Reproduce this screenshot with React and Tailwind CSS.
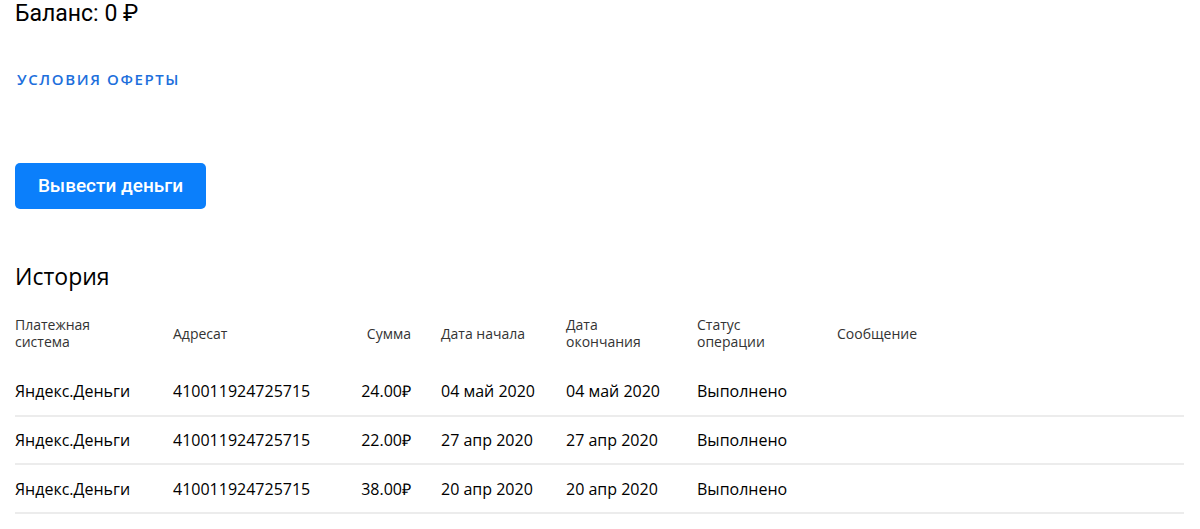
const rows = [
  { system: "Яндекс.Деньги", to: "410011924725715", sum: "24.00₽", start: "04 май 2020", end: "04 май 2020", status: "Выполнено" },
  { system: "Яндекс.Деньги", to: "410011924725715", sum: "22.00₽", start: "27 апр 2020", end: "27 апр 2020", status: "Выполнено" },
  { system: "Яндекс.Деньги", to: "410011924725715", sum: "38.00₽", start: "20 апр 2020", end: "20 апр 2020", status: "Выполнено" },
];

const cols = "grid grid-cols-[158px_168px_100px_125px_131px_140px_1fr] items-center";

export default function App() {
  return (
    <div className="min-h-screen bg-white pl-[15px] pr-4 font-['Open_Sans',sans-serif] text-[#111]">
      <h1 className="pt-0 text-[23px] leading-[28px] font-['Roboto',sans-serif] text-black">
        Баланс: 0 ₽
      </h1>

      <a href="#" className="mt-[41px] ml-[2px] block text-[15px] leading-[20px] font-semibold tracking-[1.6px] uppercase text-[#1d6fdc]">
        Условия оферты
      </a>

      <button className="mt-[74px] h-[46px] w-[191px] rounded-[5px] bg-[#0b7ffb] text-[19px] font-medium text-white font-['Roboto',sans-serif]">
        Вывести деньги
      </button>

      <h2 className="mt-[51px] text-[23px] leading-[32px] text-black">История</h2>

      <div className="mt-[6px] w-[1169px]">
        <div className={`${cols} h-[70px] text-[14px] leading-[17px] text-[#333]`}>
          <div>Платежная<br />система</div>
          <div>Адресат</div>
          <div className="pr-[30px] text-right">Сумма</div>
          <div>Дата начала</div>
          <div>Дата<br />окончания</div>
          <div>Статус<br />операции</div>
          <div>Сообщение</div>
        </div>
        {rows.map((r, i) => (
          <div key={i} className={`${cols} h-[48.7px] border-b-2 border-[#ececec] text-[16px] text-black`}>
            <div>{r.system}</div>
            <div>{r.to}</div>
            <div className="pr-[30px] text-right">{r.sum}</div>
            <div>{r.start}</div>
            <div>{r.end}</div>
            <div>{r.status}</div>
            <div></div>
          </div>
        ))}
      </div>
    </div>
  );
}
